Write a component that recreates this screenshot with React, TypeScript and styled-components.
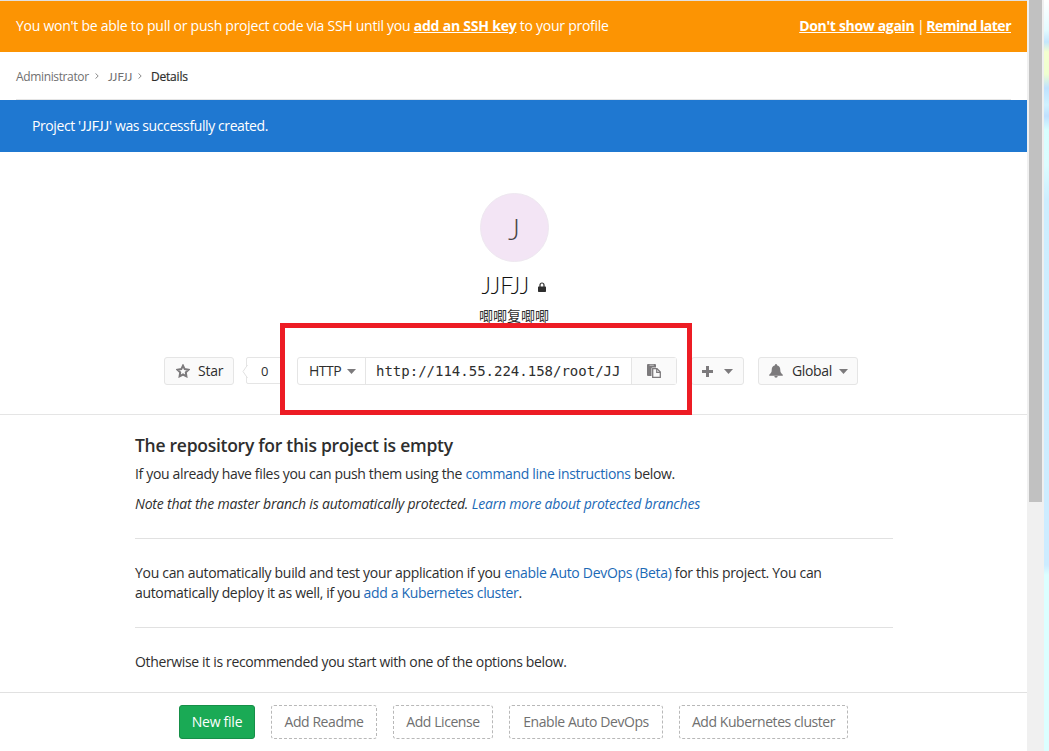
import React from "react";
import styled, { createGlobalStyle, css } from "styled-components";

const Global = createGlobalStyle`
  * { box-sizing: border-box; }
  html, body { margin: 0; background: #fff; overflow: hidden; }
  body { font: 14px/20px "Open Sans", "Noto Sans CJK SC", sans-serif; color: #2e2e2e; }
  svg { flex: none; }
`;

const Window = styled.div`
  display: flex;
  width: 1049px;
  height: 751px;
  overflow: hidden;
`;
const Page = styled.div`
  width: 1027px;
  height: 751px;
  overflow: hidden;
  border-top: 1px solid #e1e1e1;
  position: relative;
`;
const ScrollTrack = styled.div`
  width: 17px;
  padding: 0 2px;
  background: #f0f0f0;
`;
const ScrollThumb = styled.div`
  height: 502px;
  background: #c1c1c1;
`;
const Desktop = styled.div`
  width: 5px;
  background: linear-gradient(#fff 0, #e4fbff 30px, #c4e6fd 42px, #f4ffd0 52px, #efffd0 74px, #bfe2ff 88px, #d0f2ff 105px, #bfe0ff 116px, #d8ffff 130px, #dcfdff 165px, #cdeeff 200px, #cdecff 565px, #dcffff 575px, #dcffff 100%);
`;

const Text = styled.span<{ $ls?: number; $ml?: number }>`
  margin-left: ${(p) => p.$ml ?? 0}px;
  letter-spacing: ${(p) => p.$ls ?? 0}px;
  white-space: pre;
`;
const Name = styled.span`
  font-family: Lato, sans-serif;
  font-size: 0.95em;
  letter-spacing: 0;
`;

const Warning = styled.div`
  display: flex;
  justify-content: space-between;
  height: 51px;
  padding: 15px 16px 0;
  background: #fc9403;
  color: #fff;
`;
const WarningLink = styled.a<{ $ls?: number }>`
  font-weight: 700;
  letter-spacing: ${(p) => p.$ls ?? 0}px;
  text-decoration: underline;
`;
const Breadcrumbs = styled.nav`
  display: flex;
  align-items: center;
  height: 48px;
  margin: 0 16px;
  padding-top: 2px;
  border-bottom: 1px solid #e5e5e5;
  font-size: 12px;
  letter-spacing: -0.36px;
  color: #707070;
`;
const Crumb = styled.span<{ $w: number; $current?: boolean }>`
  flex: none;
  width: ${(p) => p.$w}px;
  white-space: nowrap;
  ${(p) => p.$current && css`color: #2e2e2e; letter-spacing: -0.2px; -webkit-text-stroke: 0.2px #2e2e2e;`}
`;
const CrumbArrow = styled.svg`
  width: 4px;
  height: 6px;
  margin: 0 9px 1px 6px;
  fill: none;
  stroke: #8a8a8a;
`;
const Notice = styled.div`
  height: 52px;
  padding: 16px 32px;
  background: #1f78d1;
  color: #fff;
`;

const Header = styled.header`
  display: flex;
  flex-direction: column;
  align-items: center;
  height: 263px;
  padding: 41px 0 0 1px;
  border-bottom: 1px solid #e5e5e5;
`;
const Avatar = styled.div`
  width: 69px;
  height: 69px;
  border: 1px solid #eee8f0;
  border-radius: 50%;
  background: #f3e5f5;
  color: #444;
  font: 300 29px/70px Lato, sans-serif;
  text-align: center;
`;
const Title = styled.h1`
  display: flex;
  align-items: center;
  gap: 9px;
  margin: 9px 0 0;
  font: 300 23px/28px Lato, sans-serif;
  color: #111;

  svg { margin-top: 3px; }
`;
const Description = styled.div`
  height: 20px;
  margin-top: 7px;
  font-size: 14px;
  white-space: nowrap;
`;
const Actions = styled.div`
  display: flex;
  width: 700px;
  height: 28px;
  margin-top: 31px;
`;
const Button = styled.button<{ $w: number; $ml?: number; $pl?: number }>`
  display: flex;
  flex: none;
  align-items: center;
  width: ${(p) => p.$w}px;
  height: 28px;
  margin: 0 0 0 ${(p) => p.$ml ?? 0}px;
  padding: 0 0 0 ${(p) => p.$pl ?? 11}px;
  border: 1px solid #e5e5e5;
  border-radius: 3px;
  background: #fafafa;
  color: #2e2e2e;
  font: inherit;
  white-space: nowrap;
`;
const Count = styled.div`
  position: relative;
  width: 37px;
  height: 27px;
  margin-left: 12px;
  padding-left: 14px;
  border: 1px solid #e5e5e5;
  border-radius: 2px;
  font-size: 13px;
  line-height: 27px;
`;
const CountArrow = styled.svg`
  position: absolute;
  left: -5px;
  top: 7px;
`;
const CloneBox = styled.div`
  display: flex;
  width: 380px;
  height: 28px;
  margin-left: 14px;
  border: 1px solid #e5e5e5;
  border-radius: 3px;
  line-height: 26px;
`;
const Protocol = styled.div`
  display: flex;
  align-items: center;
  gap: 6px;
  width: 68px;
  padding-left: 11px;
  border-right: 1px solid #e5e5e5;
`;
const Url = styled.div`
  width: 265px;
  padding-left: 10px;
  overflow: hidden;
  font-family: "DejaVu Sans Mono", monospace;
  font-size: 14px;
`;
const Copy = styled.div`
  display: flex;
  flex: 1;
  align-items: center;
  justify-content: center;
  border-left: 1px solid #e5e5e5;
  background: #fafafa;
`;
const Highlight = styled.div`
  position: absolute;
  left: 280px;
  top: 322px;
  width: 412px;
  height: 92px;
  border: 5px solid #ed1c24;
`;

const Content = styled.main`
  display: flow-root;
  width: 758px;
  height: 277px;
  margin-left: 135px;
`;
const Heading = styled.h2`
  margin: 18px 0 0;
  font: 600 17.5px/24px "Open Sans", sans-serif;
`;
const Paragraph = styled.p<{ $mt: number; $italic?: boolean }>`
  margin: ${(p) => p.$mt}px 0 0;
  font-style: ${(p) => (p.$italic ? "italic" : "normal")};
`;
const Link = styled.a`
  color: #1b69b6;
`;
const Rule = styled.hr`
  height: 1px;
  margin: 24px 0 0;
  border: 0;
  background: #e1e1e1;
`;
const Options = styled.footer`
  display: flex;
  gap: 16px;
  height: 59px;
  padding: 12px 0 0 179px;
  border-top: 1px solid #e1e1e1;
`;
const Option = styled.button<{ $w: number; $primary?: boolean }>`
  flex: none;
  width: ${(p) => p.$w}px;
  height: 34px;
  padding: 0;
  border: 1px ${(p) => (p.$primary ? "solid #168f48" : "dashed #b8b8b8")};
  border-radius: 3px;
  background: ${(p) => (p.$primary ? "#1aaa55" : "#fff")};
  color: ${(p) => (p.$primary ? "#fff" : "#707070")};
  font: inherit;
  letter-spacing: ${(p) => (p.$primary ? -0.25 : -0.43)}px;
`;

const CaretShape = styled.svg<{ $ml: number }>`
  margin-left: ${(p) => p.$ml}px;
`;
const Caret = ({ ml = 0 }: { ml?: number }) => (
  <CaretShape $ml={ml} width="9" height="5" viewBox="0 0 9 5">
    <path d="M0 0h9L4.5 5z" fill="#7c7a7c" />
  </CaretShape>
);
const Arrow = () => (
  <CrumbArrow viewBox="0 0 4 6"><path d="M.5.4 3.2 3 .5 5.6" /></CrumbArrow>
);

export default function App() {
  return (
    <Window>
      <Global />
      <Page>
        <Warning>
          <Text $ls={-0.26}>You won't be able to pull or push project code via SSH until you <WarningLink $ls={-0.22}>add an SSH key</WarningLink> to your profile</Text>
          <Text $ls={-1}><WarningLink $ls={-0.33}>Don't show again</WarningLink> | <WarningLink $ls={-0.5}>Remind later</WarningLink></Text>
        </Warning>
        <Breadcrumbs>
          <Crumb $w={73}>Administrator</Crumb>
          <Arrow />
          <Crumb $w={24}><Name>JJFJJ</Name></Crumb>
          <Arrow />
          <Crumb $w={40} $current>Details</Crumb>
        </Breadcrumbs>
        <Notice><Text $ls={-0.4}>Project '<Name>JJFJJ</Name>' was successfully created.</Text></Notice>
        <Header>
          <Avatar>J</Avatar>
          <Title>
            JJFJJ
            <svg width="8" height="10" viewBox="0 0 8 10">
              <path d="M2 5V3a2 2 0 0 1 4 0v2" fill="none" stroke="#2e2e2e" strokeWidth="1.2" />
              <rect y="4.5" width="8" height="5.5" rx=".7" fill="#2e2e2e" />
            </svg>
          </Title>
          <Description>唧唧复唧唧</Description>
          <Actions>
            <Button $w={70}>
              <svg width="14" height="14" viewBox="0 0 14 14">
                <path d="m7 1.600 1.700 3.500 3.900.6-2.800 2.700.6 3.900L7 10.500l-3.400 1.800.6-3.900L1.400 5.700l3.900-.6z" fill="none" stroke="#7c7a7c" strokeWidth="2" />
              </svg>
              <Text $ml={8} $ls={-0.2}>Star</Text>
            </Button>
            <Count>
              <CountArrow width="6" height="13" viewBox="0 0 6 13"><path d="M5.500 0 1 6.500 5.500 13" fill="#fff" stroke="#e1e1e1" /></CountArrow>
              0
            </Count>
            <CloneBox>
              <Protocol><Text $ls={-0.5}>HTTP</Text><Caret /></Protocol>
              <Url>http://114.55.224.158/root/JJ</Url>
              <Copy>
                <svg width="14" height="14" viewBox="0 0 14 14">
                  <path d="M0 1q0-1 1-1h7q1 0 1 1v2.500H5.500Q4.500 3.500 4.500 4.500V12H1q-1 0-1-1z" fill="#7c7a7c" />
                  <path d="M2.500 1.200h4.300" stroke="#ddd" strokeWidth=".8" />
                  <path d="M5.700 4.700h4.300L13.300 8v5.300H5.700z" fill="#fafafa" stroke="#7c7a7c" strokeWidth="1.300" />
                  <path d="M9.700 4.700V8.300h3.600" fill="none" stroke="#7c7a7c" strokeWidth="1.200" />
                </svg>
              </Copy>
            </CloneBox>
            <Button $w={53} $ml={14} $pl={10}>
              <svg width="11" height="11" viewBox="0 0 11 11"><path d="M4 0h3v4h4v3H7v4H4V7H0V4h4z" fill="#7c7a7c" /></svg>
              <Caret ml={11} />
            </Button>
            <Button $w={100} $ml={14} $pl={10}>
              <svg width="14" height="14" viewBox="0 0 14 14"><path d="M6 1.200C6-.3 8-.3 8 1.200c2.500.6 3.300 2.600 3.300 5 0 2 1 3.300 2.500 4.500v1H.200v-1c1.500-1.200 2.500-2.500 2.500-4.500 0-2.400.8-4.400 3.300-5zM5.300 12h3.400a1.700 1.700 0 0 1-3.400 0" fill="#7c7a7c" /></svg>
              <Text $ml={9} $ls={-0.35}>Global</Text>
              <Caret ml={7} />
            </Button>
          </Actions>
        </Header>
        <Content>
          <Heading><Text $ls={-0.27}>The repository for this project is empty</Text></Heading>
          <Paragraph $mt={7}><Text $ls={-0.34}>If you already have files you can push them using the <Link>command line instructions</Link> below.</Text></Paragraph>
          <Paragraph $mt={10} $italic><Text $ls={-0.19}>Note that the master branch is automatically protected. <Link>Learn more about protected branches</Link></Text></Paragraph>
          <Rule />
          <Paragraph $mt={24}>
            <Text $ls={-0.31}>You can automatically build and test your application if you <Link>enable Auto DevOps (Beta)</Link> for this project. You can</Text><br />
            <Text $ls={-0.33}>automatically deploy it as well, if you <Link>add a Kubernetes cluster</Link>.</Text>
          </Paragraph>
          <Rule />
          <Paragraph $mt={24}><Text $ls={-0.35}>Otherwise it is recommended you start with one of the options below.</Text></Paragraph>
        </Content>
        <Options>
          <Option $w={76} $primary>New file</Option>
          <Option $w={106}>Add Readme</Option>
          <Option $w={100}>Add License</Option>
          <Option $w={154}>Enable Auto DevOps</Option>
          <Option $w={169}>Add Kubernetes cluster</Option>
        </Options>
        <Highlight />
      </Page>
      <ScrollTrack><ScrollThumb /></ScrollTrack>
      <Desktop />
    </Window>
  );
}
